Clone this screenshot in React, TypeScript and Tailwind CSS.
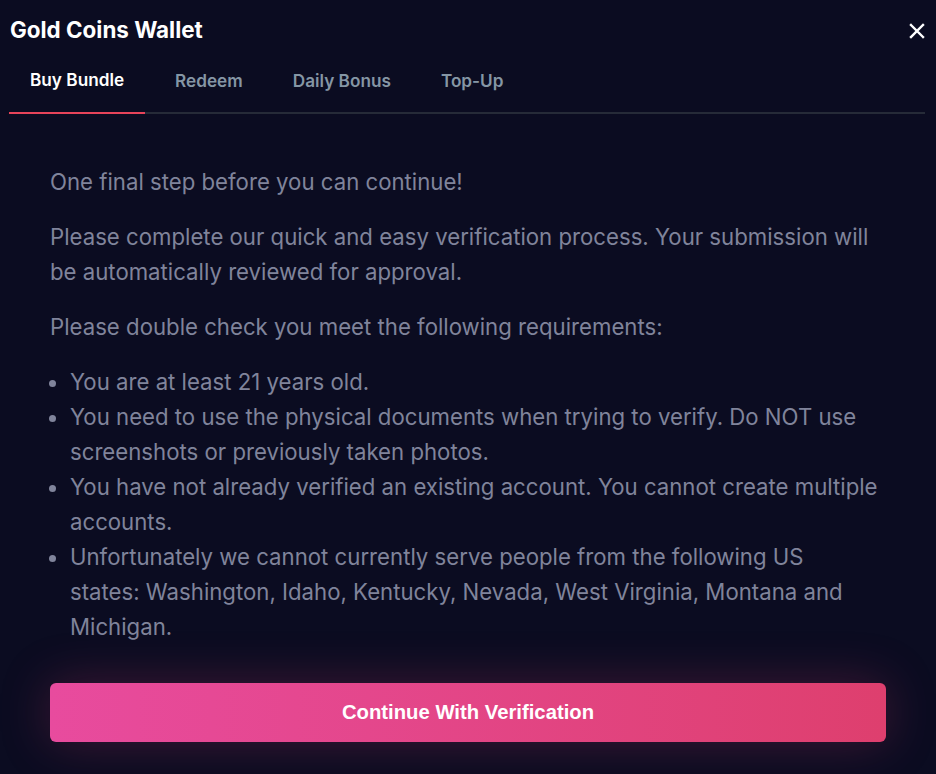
import React from "react";

const tabs = ["Buy Bundle", "Redeem", "Daily Bonus", "Top-Up"];

export default function App() {
  return (
    <div className="w-[936px] h-[774px] bg-[#0b0c21] flex flex-col overflow-hidden font-['Inter','Noto_Sans',sans-serif]">
      <div className="flex items-start justify-between pl-[10px] pr-[11px] pt-[16px] h-[48px]">
        <h1 className="text-[22.4px] leading-[28px] font-bold text-white">Gold Coins Wallet</h1>
        <button className="mt-[7px] text-white" aria-label="Close">
          <svg width="16" height="16" viewBox="0 0 16 16" fill="none">
            <path d="M2 2L14 14M14 2L2 14" stroke="white" strokeWidth="2.4" strokeLinecap="square" />
          </svg>
        </button>
      </div>

      <div className="mx-[9px] w-[916px] flex gap-[10px] border-b-[2px] border-[#262b38]">
        {tabs.map((t, i) => (
          <div
            key={t}
            className={
              i === 0
                ? "h-[66px] -mb-[2px] px-[21px] flex items-center text-[17.2px] font-semibold text-white border-b-[2px] border-[#e8445a]"
                : "h-[66px] -mb-[2px] px-[20px] flex items-center text-[17.2px] font-semibold text-[#8596a5]"
            }
          >
            {t}
          </div>
        ))}
      </div>

      <div className="flex-1 flex flex-col px-[50px] pt-[50px]">
        <div className="w-[828px] text-[22.2px] leading-[35px] text-[#80849b]">
          <p className="mb-[20px]">One final step before you can continue!</p>
          <p className="mb-[20px]">
            Please complete our quick and easy verification process. Your submission will be automatically
            reviewed for approval.
          </p>
          <p className="mb-[20px]">Please double check you meet the following requirements:</p>
          <ul className="list-disc pl-[20px] marker:text-[#80849b]">
            <li>You are at least 21 years old.</li>
            <li>
              You need to use the physical documents when trying to verify. Do NOT use screenshots or previously
              taken photos.
            </li>
            <li>You have not already verified an existing account. You cannot create multiple accounts.</li>
            <li>
              Unfortunately we cannot currently serve people from the following US states: Washington, Idaho,
              Kentucky, Nevada, West Virginia, Montana and Michigan.
            </li>
          </ul>
        </div>
        <button className="mt-[39px] h-[59px] w-full rounded-[6px] bg-gradient-to-r from-[#e84b9e] to-[#de3f6e] text-white font-bold text-[20.3px] font-['Liberation_Sans',Arial,sans-serif] shadow-[0_0_50px_rgba(225,60,110,0.25)]">
          Continue With Verification
        </button>
      </div>
    </div>
  );
}
